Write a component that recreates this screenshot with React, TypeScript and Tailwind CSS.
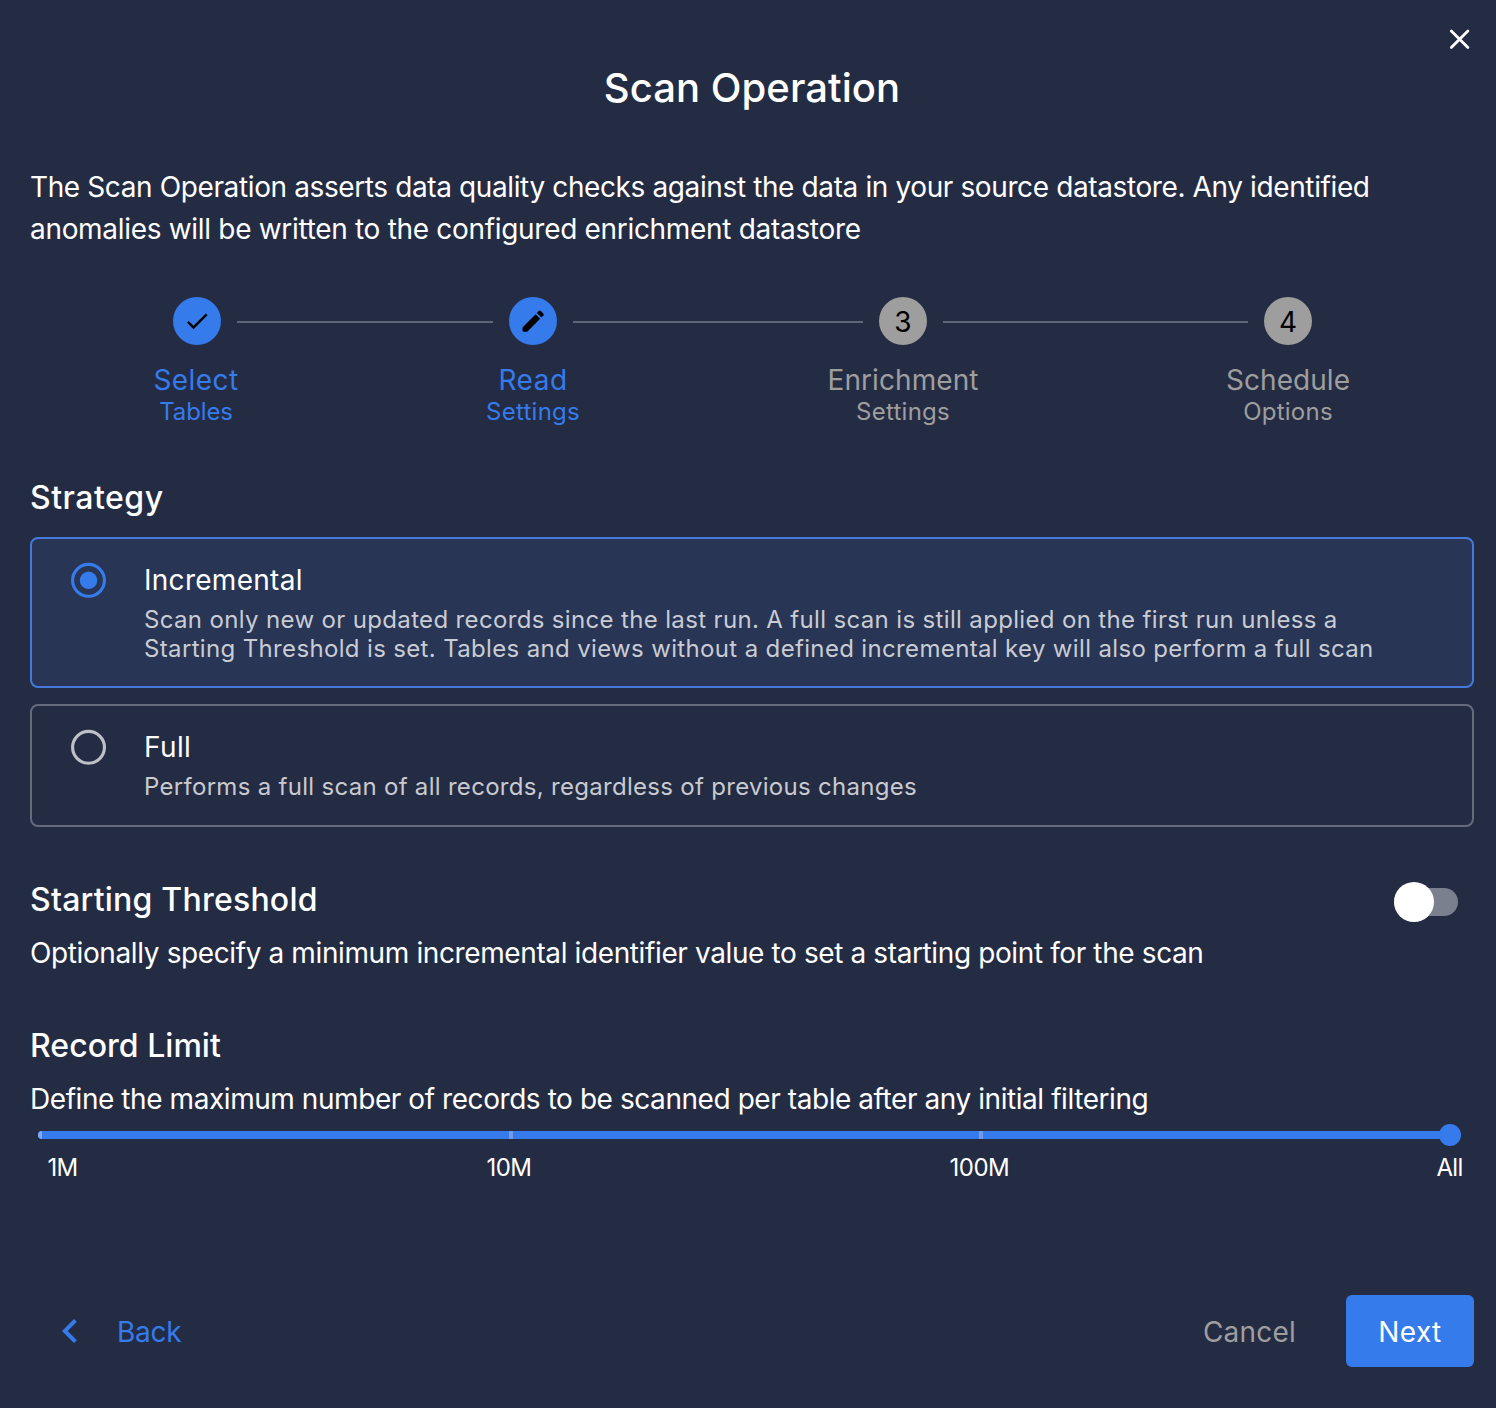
import React from "react";

function Step({ icon, title, sub, active, titleClass, subClass }: {
  icon: React.ReactNode; title: string; sub: string; active?: boolean; titleClass: string; subClass: string;
}) {
  return (
    <div className={`flex w-12 flex-col items-center whitespace-nowrap ${active ? "text-[#357bec]" : "text-[#9e9e9e]"}`}>
      <div className={`flex size-12 shrink-0 items-center justify-center rounded-full pt-px text-[28px] leading-[50px] text-black ${active ? "bg-[#357bec]" : "bg-[#9e9e9e]"}`}>
        {icon}
      </div>
      <div className={`mt-5 text-[28px] leading-[31px] ${titleClass}`}>{title}</div>
      <div className={`text-[24px] leading-8 ${subClass}`}>{sub}</div>
    </div>
  );
}

function Line({ className }: { className: string }) {
  return <div className={`mx-4 mt-6 h-0.5 shrink-0 bg-[#5f667a] ${className}`} />;
}

function Radio({ checked }: { checked?: boolean }) {
  return (
    <svg viewBox="0 0 24 24" className={`ml-[35px] size-[42px] shrink-0 ${checked ? "text-[#357bec]" : "text-[#bdc0c7]"}`}>
      <circle cx="12.3" cy="12.2" r="9.100" fill="none" stroke="currentColor" strokeWidth="1.800" />
      {checked && <circle cx="12.3" cy="12.2" r="5" fill="currentColor" />}
    </svg>
  );
}

export default function App() {
  return (
    <div className="h-[1408px] w-[1496px] overflow-hidden bg-[#242c44] pl-[30px] pr-[22px] font-['Inter',sans-serif] text-white">
      <div className="flex h-[58px] justify-end pt-[27px]">
        <svg viewBox="0 0 24 24" className="mr-[2px] size-6" fill="none" stroke="white" strokeWidth="2.8" strokeLinecap="round">
          <path d="M3.300 3.900 19.900 20.500M19.900 3.900 3.300 20.500" />
        </svg>
      </div>
      <h1 className="text-center text-[40px] font-medium leading-[60px] tracking-[0.05px]">Scan Operation</h1>
      <p className="mt-12 whitespace-nowrap text-[28px] leading-[42px]">
        <span className="block tracking-[-0.385px]">The Scan Operation asserts data quality checks against the data in your source datastore. Any identified</span>
        <span className="block tracking-[-0.31px]">anomalies will be written to the configured enrichment datastore</span>
      </p>

      <div className="mt-[47px] flex h-[176px] items-start pl-[143px]">
        <Step active title="Select" sub="Tables" titleClass="-ml-0.5 tracking-[0.42px]" subClass="-ml-0.5 tracking-[-0.142px]" icon={
          <svg viewBox="0 0 24 24" className="-ml-px -mt-0.5 size-7" fill="currentColor"><path d="M21 7 9 19l-5.500-5.500 1.410-1.410L9 16.170 19.590 5.590z" /></svg>
        } />
        <Line className="w-[256px]" />
        <Step active title="Read" sub="Settings" titleClass="tracking-[0.5px]" subClass="tracking-[0.25px]" icon={
          <svg viewBox="0 0 24 24" className="-mt-px size-7" fill="currentColor"><path d="M14.300 6.200 3.600 16.900Q3 17.500 3 18.300V20Q3 21.300 4.300 21.300H6Q6.900 21.300 7.500 20.700L18.100 10zM15.300 5.100 16.900 3.500Q17.800 2.600 18.700 3.500L20.800 5.600Q21.700 6.500 20.800 7.400L19.200 9z" /></svg>
        } />
        <Line className="w-[290px]" />
        <Step title="Enrichment" sub="Settings" titleClass="tracking-[0.08px]" subClass="tracking-[0.25px]" icon="3" />
        <Line className="w-[305px]" />
        <Step title="Schedule" sub="Options" titleClass="tracking-[0.05px]" subClass="tracking-[0.25px]" icon="4" />
      </div>

      <h2 className="pt-px text-[32px] font-medium leading-[48px] tracking-[0.5px]">Strategy</h2>
      <div className="mt-[15px] flex h-[151px] items-start rounded-lg border-2 border-[#4579dc] bg-[#283554] pt-5">
        <Radio checked />
        <div className="ml-[35px] whitespace-nowrap">
          <div className="text-[28px] leading-[42px] tracking-[0.28px]">Incremental</div>
          <div className="mt-1 text-[24px] leading-[29px] text-[#c9ccd4]">
            <span className="block tracking-[0.347px]">Scan only new or updated records since the last run. A full scan is still applied on the first run unless a</span>
            <span className="block tracking-[0.347px]">Starting Threshold is set. Tables and views without a defined incremental key will also perform a full scan</span>
          </div>
        </div>
      </div>
      <div className="mt-4 flex h-[123px] items-start rounded-lg border-2 border-[#656a7c] pt-5">
        <Radio />
        <div className="ml-[35px] whitespace-nowrap">
          <div className="text-[28px] leading-[42px] tracking-[0.4px]">Full</div>
          <div className="mt-1 text-[24px] leading-[29px] tracking-[0.297px] text-[#c8cad0]">Performs a full scan of all records, regardless of previous changes</div>
        </div>
      </div>

      <div className="mt-12 flex items-start justify-between">
        <h2 className="pt-px text-[32px] font-medium leading-[48px] tracking-[0.22px]">Starting Threshold</h2>
        <div className="mr-4 mt-[7px] flex h-10 w-16 items-center">
          <div className="h-7 w-full rounded-full bg-[#7a808d]">
            <div className="-mt-1.5 size-10 rounded-full bg-white" />
          </div>
        </div>
      </div>
      <p className="mt-2 whitespace-nowrap text-[28px] leading-[42px] tracking-[-0.385px]">Optionally specify a minimum incremental identifier value to set a starting point for the scan</p>

      <h2 className="mt-[47px] pt-px text-[32px] font-medium leading-[48px] tracking-[0.03px]">Record Limit</h2>
      <p className="mt-2 whitespace-nowrap text-[28px] leading-[42px] tracking-[-0.435px]">Define the maximum number of records to be scanned per table after any initial filtering</p>

      <div className="ml-2 mt-[11px] flex h-2 w-[1412px] items-center">
        <div className="flex h-2 flex-1 overflow-hidden rounded-l-full bg-[#357bec]">
          <div className="w-1 bg-[#7fa8f0]" />
          <div className="ml-[466.5px] w-1 bg-[#6d9cee]" />
          <div className="ml-[466.5px] w-1 bg-[#6d9cee]" />
        </div>
        <div className="-ml-[10.500px] -mr-[11px] size-[22px] shrink-0 rounded-full bg-[#357bec]" />
      </div>
      <div className="mt-[13px] flex pl-[17.500px] text-[24px] leading-8">
        <span className="w-[439px] tracking-[-0.762px]">1M</span>
        <span className="w-[463px] tracking-[-0.6px]">10M</span>
        <span className="w-[487px] tracking-[-0.5px]">100M</span>
        <span className="tracking-[-0.686px]">All</span>
      </div>

      <div className="mt-[111px] flex h-[72px] items-center text-[28px] leading-[42px]">
        <svg viewBox="0 0 24 24" className="ml-[16px] size-12 text-[#357bec]" fill="currentColor"><path d="M15.410 16.580 10.830 12l4.580-4.590L14 6l-6 6 6 6z" /></svg>
        <span className="ml-[23px] pt-0.5 tracking-[-0.3px] text-[#357bec]">Back</span>
        <span className="ml-auto mr-[50px] pt-0.5 tracking-[0.2px] text-[#9e9e9e]">Cancel</span>
        <button className="h-[72px] w-32 rounded-md bg-[#357bec] pt-0.5 tracking-[0.4px]">Next</button>
      </div>
    </div>
  );
}
